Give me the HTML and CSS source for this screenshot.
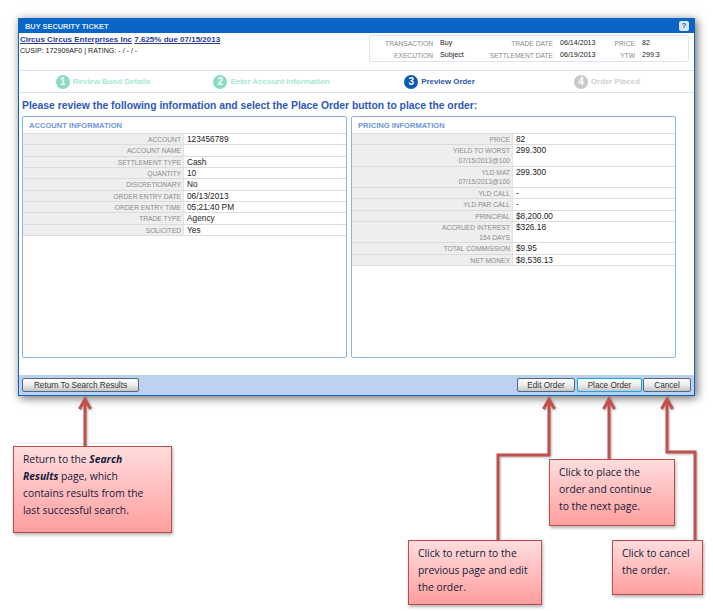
FILE: index.html
```html
<!DOCTYPE html>
<html lang="en">

<head>
    <meta charset="UTF-8">
    <title>Buy Security Ticket</title>
    <link rel="stylesheet" href="styles.css">
</head>

<body>
    <div class="ticket">
        <div class="title-bar">
            <span>BUY SECURITY TICKET</span>
            <span class="help-btn">?</span>
        </div>

        <div class="bond-header">
            <div class="bond-info">
                <div class="bond-name"><a href="#">Circus Circus Enterprises Inc</a> <a href="#">7.625% due 07/15/2013</a></div>
                <div class="bond-cusip">CUSIP: 172909AF0 | RATING: - / - / -</div>
            </div>
            <div class="summary">
                <span class="summary-label">TRANSACTION</span><span class="summary-value">Buy</span>
                <span class="summary-label">TRADE DATE</span><span class="summary-value">06/14/2013</span>
                <span class="summary-label">PRICE</span><span class="summary-value">82</span>
                <span class="summary-label">EXECUTION</span><span class="summary-value">Subject</span>
                <span class="summary-label">SETTLEMENT DATE</span><span class="summary-value">06/19/2013</span>
                <span class="summary-label">YTW</span><span class="summary-value">299.3</span>
            </div>
        </div>

        <div class="steps">
            <div class="step done"><span class="step-num">1</span>Review Bond Details</div>
            <div class="step done"><span class="step-num">2</span>Enter Account Information</div>
            <div class="step current"><span class="step-num">3</span>Preview Order</div>
            <div class="step todo"><span class="step-num">4</span>Order Placed</div>
        </div>

        <h1 class="instructions">Please review the following information and select the Place Order button to place the order:</h1>

        <div class="panels">
            <div class="panel">
                <h2>ACCOUNT INFORMATION</h2>
                <div class="row"><div class="label">ACCOUNT</div><div class="value">123456789</div></div>
                <div class="row"><div class="label">ACCOUNT NAME</div><div class="value"></div></div>
                <div class="row"><div class="label">SETTLEMENT TYPE</div><div class="value">Cash</div></div>
                <div class="row"><div class="label">QUANTITY</div><div class="value">10</div></div>
                <div class="row"><div class="label">DISCRETIONARY</div><div class="value">No</div></div>
                <div class="row"><div class="label">ORDER ENTRY DATE</div><div class="value">06/13/2013</div></div>
                <div class="row"><div class="label">ORDER ENTRY TIME</div><div class="value">05:21:40 PM</div></div>
                <div class="row"><div class="label">TRADE TYPE</div><div class="value">Agency</div></div>
                <div class="row"><div class="label">SOLICITED</div><div class="value">Yes</div></div>
            </div>
            <div class="panel">
                <h2>PRICING INFORMATION</h2>
                <div class="row"><div class="label">PRICE</div><div class="value">82</div></div>
                <div class="row"><div class="label">YIELD TO WORST<small>07/15/2013@100</small></div><div class="value">299.300</div></div>
                <div class="row"><div class="label">YLD MAT<small>07/15/2013@100</small></div><div class="value">299.300</div></div>
                <div class="row"><div class="label">YLD CALL</div><div class="value">-</div></div>
                <div class="row"><div class="label">YLD PAR CALL</div><div class="value">-</div></div>
                <div class="row"><div class="label">PRINCIPAL</div><div class="value">$8,200.00</div></div>
                <div class="row"><div class="label">ACCRUED INTEREST<small>154 DAYS</small></div><div class="value">$326.18</div></div>
                <div class="row"><div class="label">TOTAL COMMISSION</div><div class="value">$9.95</div></div>
                <div class="row"><div class="label">NET MONEY</div><div class="value">$8,536.13</div></div>
            </div>
        </div>

        <div class="toolbar">
            <button class="btn btn-return">Return To Search Results</button>
            <button class="btn btn-edit">Edit Order</button>
            <button class="btn btn-place">Place Order</button>
            <button class="btn btn-cancel">Cancel</button>
        </div>
    </div>

    <!-- Annotation arrows over the screenshot -->
    <svg class="arrows" width="713" height="611" viewBox="0 0 713 611" fill="none">
        <path d="M85 446V399M79.5 409L85 399L90.5 409" />
        <path d="M498 541V455H549V399M543.5 409L549 399L554.5 409" />
        <path d="M609 459V399M603.5 409L609 399L614.5 409" />
        <path d="M695 541V452H667V399M661.5 409L667 399L672.5 409" />
    </svg>

    <div class="note note-return">Return to the <b><i>Search</i></b><br><b><i>Results</i></b> page, which<br>contains results from the<br>last successful search.</div>
    <div class="note note-edit">Click to return to the<br>previous page and edit<br>the order.</div>
    <div class="note note-place">Click to place the<br>order and continue<br>to the next page.</div>
    <div class="note note-cancel">Click to cancel<br>the order.</div>
</body>

</html>
```

FILE: styles.css
```css
body {
    margin: 0;
    width: 713px;
    height: 611px;
    overflow: hidden;
    background: #ffffff;
    font-family: "Liberation Sans", Arial, sans-serif;
    color: #222;
}

.ticket {
    margin: 18px 0 0 18px;
    width: 677px;
    height: 378px;
    box-sizing: border-box;
    display: flex;
    flex-direction: column;
    background: #fff;
    border: 1px solid #0a66c6;
    border-top: 0;
    box-shadow: 2px 2px 9px rgba(0, 0, 0, 0.6);
}

.title-bar {
    height: 15px;
    flex: none;
    box-sizing: border-box;
    margin: 0 -1px;
    padding: 1px 6px 0 7px;
    display: flex;
    align-items: center;
    justify-content: space-between;
    background: #0a66c6;
    color: #dfeaf7;
    font-size: 7.4px;
    font-weight: bold;
}

.help-btn {
    width: 10px;
    height: 10px;
    margin-top: -1px;
    border-radius: 2px;
    background: #dce8f6;
    color: #0a66c6;
    font-size: 8px;
    line-height: 10px;
    text-align: center;
}

.bond-header {
    height: 38px;
    flex: none;
    box-sizing: border-box;
    padding: 2px 5px 0 1px;
    display: flex;
    justify-content: space-between;
    border-bottom: 1px solid #d9e4f6;
}

.bond-info {
    margin-top: -1px;
}

.bond-name {
    font-size: 8px;
    font-weight: bold;
    line-height: 11px;
}

.bond-name a {
    color: #263c8c;
}

.bond-cusip {
    font-size: 7.1px;
    line-height: 10px;
    margin-top: 1px;
}

.summary {
    width: 320px;
    height: 27px;
    box-sizing: border-box;
    padding: 1px 0;
    display: grid;
    grid-template-columns: 63px 46px 74px 50px 32px 47px;
    grid-auto-rows: 12px;
    align-items: center;
    border: 1px solid #dde5f2;
    border-radius: 2px;
    font-size: 7.1px;
}

.summary-label {
    color: #8a8a8a;
    font-size: 6.7px;
    text-align: right;
}

.summary-value {
    padding-left: 7px;
    white-space: nowrap;
}

.steps {
    height: 22px;
    flex: none;
    box-sizing: border-box;
    display: grid;
    grid-template-columns: 168px 169px 167px 168px;
    border-bottom: 1px solid #d9e4f6;
}

.step {
    display: flex;
    align-items: center;
    justify-content: center;
    gap: 3px;
    font-size: 7.9px;
    font-weight: bold;
}

.step-num {
    width: 14px;
    height: 14px;
    border-radius: 50%;
    color: #fff;
    font-size: 10px;
    line-height: 14px;
    text-align: center;
}

.done { color: #a6e8d2; }
.done .step-num { background: #8adcc0; }
.current { color: #2a55a8; }
.current .step-num { background: #0a5ab4; }
.todo { color: #cfcfcf; }
.todo .step-num { background: #c9c9c9; }

.instructions {
    margin: 0;
    height: 23px;
    flex: none;
    box-sizing: border-box;
    padding: 6px 0 0 3px;
    color: #2e58b8;
    font-size: 10.35px;
    line-height: 13px;
    font-weight: bold;
    white-space: nowrap;
}

.panels {
    height: 242px;
    flex: none;
    padding-left: 3px;
    display: flex;
    gap: 4px;
}

.panel {
    width: 325px;
    box-sizing: border-box;
    border: 1px solid #8fb3e6;
    border-radius: 2px;
}

.panel h2 {
    margin: 0;
    height: 16px;
    padding-left: 6px;
    color: #7096d8;
    font-size: 7.6px;
    line-height: 17px;
    font-weight: bold;
}

.row {
    display: flex;
    border-bottom: 1px solid #dcdcdc;
}

.row:first-of-type {
    border-top: 1px solid #dcdcdc;
}

.label {
    width: 161px;
    flex: none;
    box-sizing: border-box;
    padding: 2px 2px 0 0;
    background: #eeeeee;
    border-right: 1px solid #e2e2e2;
    color: #8c8c8c;
    font-size: 6.7px;
    line-height: 8.33px;
    text-align: right;
}

.label small {
    display: block;
    margin-top: 1.5px;
    font-size: 6.7px;
    line-height: 8.5px;
}

.value {
    padding: 1px 0 0 3px;
    font-size: 8.3px;
    line-height: 9.33px;
}

.toolbar {
    margin-top: 17px;
    flex: 1;
    padding: 3px 3px 0 3px;
    display: flex;
    align-items: flex-start;
    background: #bcd2f0;
}

.btn {
    height: 14px;
    padding: 1px 0 0;
    box-sizing: border-box;
    border: 1px solid #4f6684;
    border-radius: 2px;
    background: linear-gradient(to bottom, #fdfdfd, #ececec 50%, #c6c6c6);
    color: #333;
    font-family: "Liberation Sans", Arial, sans-serif;
    font-size: 8.2px;
    line-height: 11px;
}

.btn-return { width: 117px; }
.btn-edit { width: 58px; margin-left: auto; }
.btn-place { width: 65px; margin-left: 2px; border-color: #1fa6e0; box-shadow: 0 0 1px #38c4f4; }
.btn-cancel { width: 48px; margin-left: 1px; }

.arrows {
    position: absolute;
    top: 0;
    left: 0;
    filter: drop-shadow(1px 1px 1px rgba(0, 0, 0, 0.3));
}

.arrows path {
    stroke: #c0504d;
    stroke-width: 3;
}

.note {
    position: absolute;
    box-sizing: border-box;
    padding: 4px 9px;
    border: 1px solid #be4b48;
    background: linear-gradient(to bottom, #ffdddd, #ff9e9e);
    box-shadow: 1px 2px 3px rgba(0, 0, 0, 0.3);
    color: #141a3a;
    font-family: "Open Sans", sans-serif;
    font-size: 10.3px;
    line-height: 17px;
}

.note-return { left: 13px; top: 446px; width: 159px; height: 87px; }
.note-edit { left: 408px; top: 540px; width: 134px; height: 65px; }
.note-place { left: 549px; top: 459px; width: 126px; height: 67px; }
.note-cancel { left: 612px; top: 540px; width: 91px; height: 55px; }
```
